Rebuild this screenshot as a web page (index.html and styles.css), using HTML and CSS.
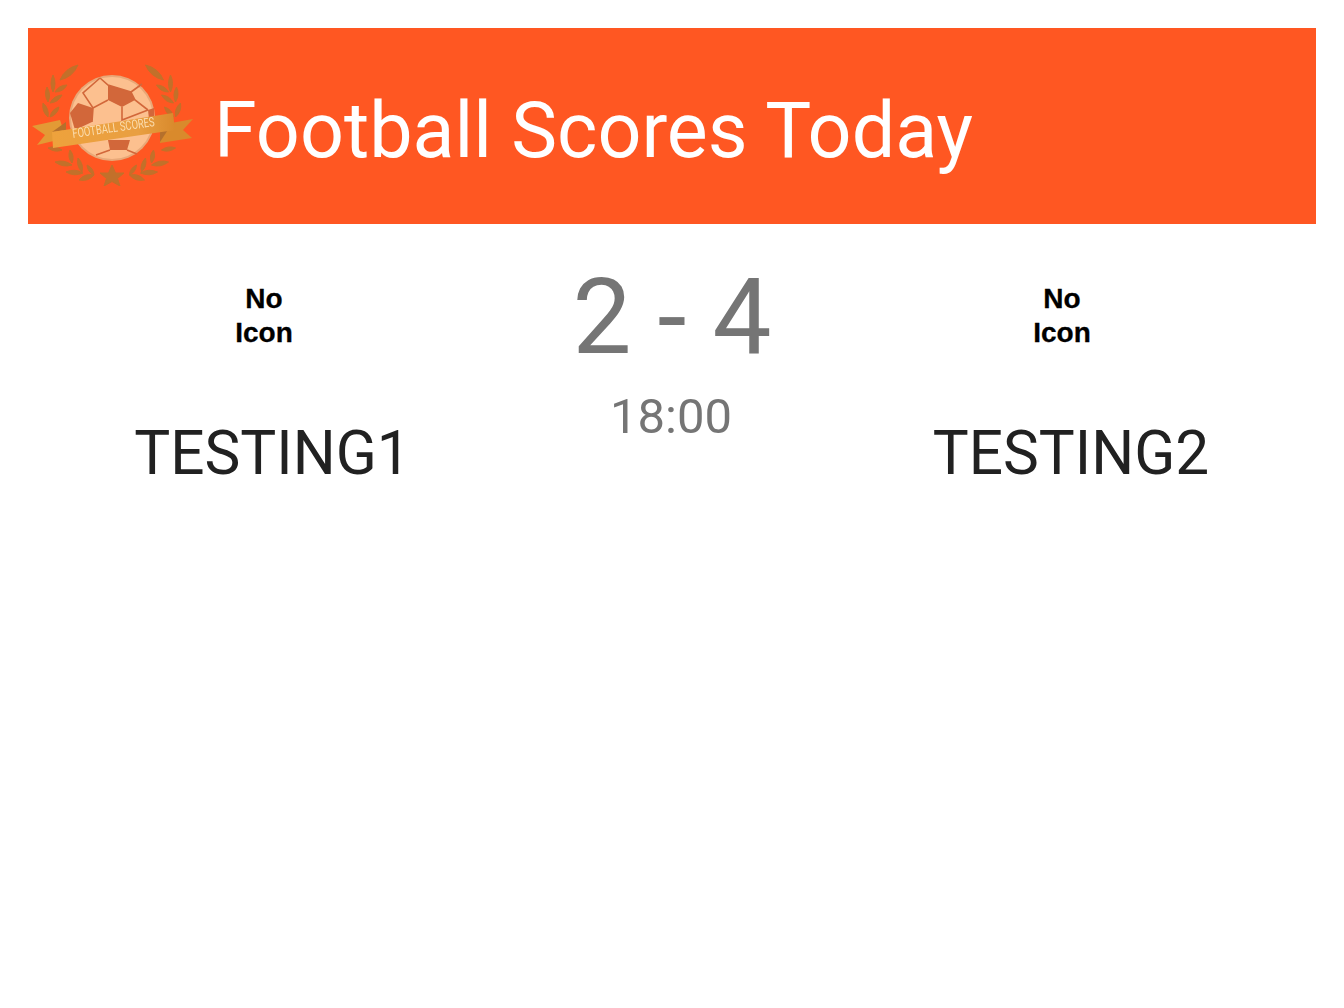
FILE: index.html
```html
<!DOCTYPE html>
<html lang="en">
<head>
    <meta charset="UTF-8">
    <meta name="viewport" content="width=device-width, initial-scale=1.0">
    <title>Football Scores Today</title>
    <link rel="stylesheet" href="styles.css">
</head>
<body>
<header class="toolbar">
    <svg class="logo" viewBox="0 0 164 124" aria-hidden="true">
        <defs>
            <linearGradient id="ribbonFill" x1="0" x2="1" y1="0" y2="0">
                <stop offset="0" stop-color="#eea23c"/>
                <stop offset="0.7" stop-color="#e99f42"/>
                <stop offset="1" stop-color="#d98a2c"/>
            </linearGradient>
            <g id="wreath">
                <path d="M30 18 Q43 15 48 3 Q35 6 30 18 Z"/>
                <path d="M23 13 Q27 21.5 23 30 Q19 21.5 23 13 Z"/>
                <path d="M25 30 Q33 30 37 23 Q29 23 25 30 Z"/>
                <path d="M17 25 Q21.5 32.5 18 40 Q13.5 32.5 17 25 Z"/>
                <path d="M20 41 Q28 40.5 32 33 Q24 33.5 20 41 Z"/>
                <path d="M13 41 Q19.5 46.6 18 55 Q11.5 49.4 13 41 Z"/>
                <path d="M20 55 Q27.5 52.7 29 45 Q21.5 47.3 20 55 Z"/>
                <path d="M18 86 Q25 91 32 88 Q25 83 18 86 Z"/>
                <path d="M25 100 Q33 106 42 103 Q34 97 25 100 Z"/>
                <path d="M40 88 Q45 94 42 101 Q37 95 40 88 Z"/>
                <path d="M36 110 Q44 115 53 111 Q45 106 36 110 Z"/>
                <path d="M48 96 Q54 102 52 110 Q46 104 48 96 Z"/>
                <path d="M49 118 Q58 120 64 113 Q55 111 49 118 Z"/>
                <path d="M57 103 Q63.5 106 64 113 Q57.5 110 57 103 Z"/>
            </g>
        </defs>
        <g class="leaves">
            <use href="#wreath"/>
            <use href="#wreath" transform="translate(163.5 0) scale(-1 1)"/>
            <path d="M82 103 L85.5 111 L94 111 L87.5 116.5 L90 124 L82 119.5 L74 124 L76.5 116.5 L70 111 L78.5 111 Z"/>
        </g>
        <!-- ball -->
        <circle cx="82" cy="56" r="43" fill="#e8a878"/>
        <circle cx="82" cy="56" r="41" fill="#fcc08f"/>
        <g fill="#d2673a">
            <path d="M78 23 L101 30 L105 38 L92 45 L78 38 Z"/>
            <path d="M40 51 L48 41 L63 46 L62 60 L45 68 Z"/>
            <path d="M78 78 L100 78 L97 88 L80 88 Z"/>
            <path d="M118 48 L124 46 L124 62 L120 66 Z"/>
        </g>
        <g fill="none" stroke="#d2673a" stroke-width="1.6">
            <path d="M70 16 L78 23 L101 30 L112 22 M70 16 L53 31 L63 46 L78 38 M101 30 L105 38 L118 48 M92 45 L92 58 L118 48 M63 46 L62 60 M97 88 L107 92 M80 88 L66 93"/>
        </g>
        <!-- ribbon -->
        <path fill="#e39a35" d="M2 64 L30 58 L36 76 L7 83 L15 73 Z"/>
        <path fill="#d98a2c" d="M163 57 L130 63 L130 81 L162 76 L153 68 Z"/>
        <path fill="#b5702c" d="M22 70 L36 60 L36 68 Z"/>
        <path fill="#b5702c" d="M130 60 L143 60 L130 80 Z"/>
        <path fill="url(#ribbonFill)" d="M22 70 L143 51 L145 68 L23 86 Z"/>
        <text class="logo-text" x="43" y="76" transform="rotate(-8.3 43 76)" textLength="83" lengthAdjust="spacingAndGlyphs">FOOTBALL SCORES</text>
    </svg>
    <h1 class="toolbar-title">Football Scores Today</h1>
</header>
<main class="match">
    <section class="team team-home">
        <div class="no-icon">No<br>Icon</div>
        <div class="team-name">TESTING1</div>
    </section>
    <section class="result">
        <div class="score">2 - 4</div>
        <div class="kickoff">18:00</div>
    </section>
    <section class="team team-away">
        <div class="no-icon">No<br>Icon</div>
        <div class="team-name">TESTING2</div>
    </section>
</main>
</body>
</html>
```

FILE: styles.css
```css
body, html {
    margin: 0;
    padding: 0;
    background-color: #fff;
    font-family: Roboto, Arial, sans-serif;
}

body {
    padding: 28px;
}

.toolbar {
    display: flex;
    align-items: center;
    height: 196px;
    background-color: #ff5722;
}

.logo {
    width: 164px;
    height: 124px;
    margin-left: 2px;
    margin-top: -4px;
    flex: none;
    filter: blur(0.5px);
}

.leaves {
    fill: #c2702a;
    stroke: #c2702a;
    stroke-width: 1;
}

.logo-text {
    font-family: Roboto, Arial, sans-serif;
    font-size: 13px;
    fill: #fbdcae;
}

.toolbar-title {
    margin: 9px 0 0 20px;
    font-size: 77.2px;
    font-weight: 400;
    line-height: 90px;
    color: #fff;
}

.match {
    display: grid;
    grid-template-columns: 484px 1fr 484px;
}

.team {
    display: flex;
    flex-direction: column;
    align-items: center;
    padding-top: 58px;
}

.no-icon {
    width: 100px;
    margin-right: 12px;
    font-family: "Liberation Sans", Arial, sans-serif;
    font-size: 28px;
    font-weight: 700;
    line-height: 34px;
    text-align: center;
    color: #000;
    -webkit-text-stroke: 0.3px #000;
}

.team-name {
    margin-top: 69px;
    font-size: 60.3px;
    line-height: 70px;
    color: #212121;
}

.team-home .team-name {
    margin-left: 5px;
}

.team-away .team-name {
    margin-right: 6px;
}

.team-away .no-icon {
    margin-right: 24px;
}

.result {
    text-align: center;
    padding-top: 32px;
}

.score {
    font-size: 105px;
    line-height: 123px;
    color: #757575;
}

.kickoff {
    font-size: 49px;
    line-height: 58px;
    margin-top: 9px;
    margin-right: 2px;
    color: #757575;
}
```
